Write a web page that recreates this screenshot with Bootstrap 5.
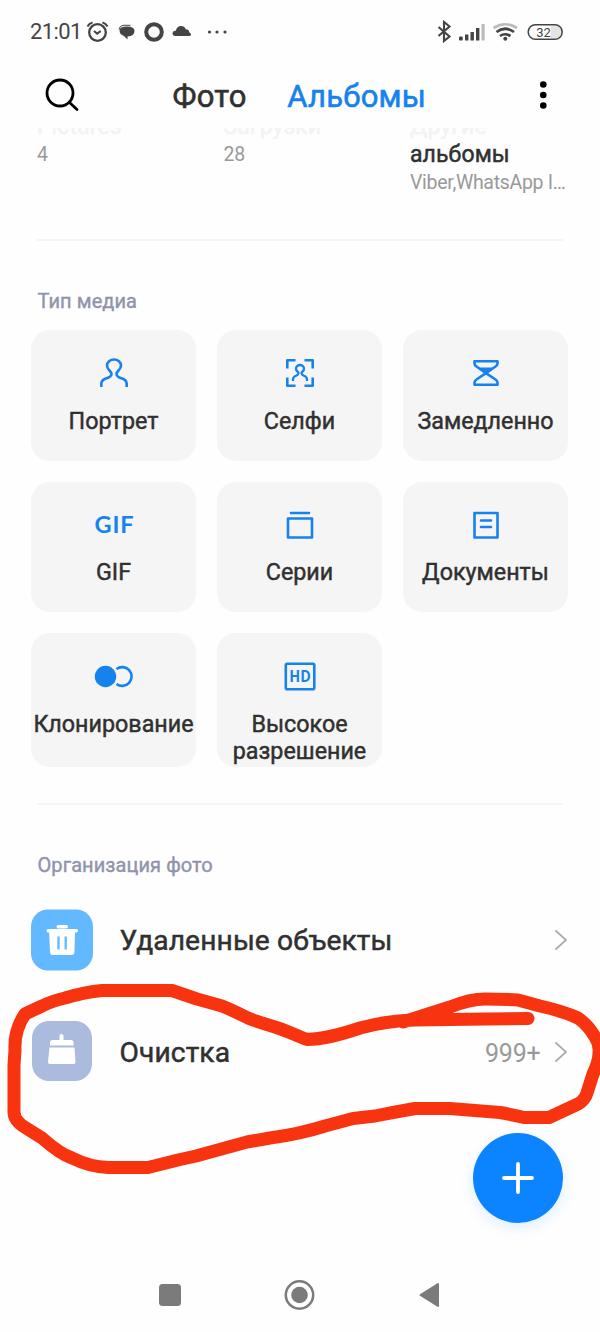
<!DOCTYPE html>
<html lang="ru">
<head>
<meta charset="utf-8">
<meta name="viewport" content="width=device-width, initial-scale=1">
<title>Альбомы</title>
<link href="https://cdn.jsdelivr.net/npm/bootstrap@5.3.0/dist/css/bootstrap.min.css" rel="stylesheet">
<style>
  body { font-family: Roboto, "Noto Sans", sans-serif; color: #303030; background: #fefefe; line-height: 1.2; }
  svg { display: block; flex: none; }
  .screen { width: 600px; height: 1332px; }
  .status-bar { height: 64px; padding: 0 36px 0 30px; color: #444; }
  .clock { font-size: 22px; letter-spacing: -.6px; padding-top: 1px; width: 52px; }
  .tabs-bar { height: 60px; padding: 4px 43px 0; }
  .tab-item { font-size: 31px; letter-spacing: .25px; padding-top: 2px; -webkit-text-stroke: .6px; }
  .accent { color: #1582ee; }
  .albums { height: 115px; padding: 0 32px 0 37px; }
  .album { width: 186.5px; font-size: 19.5px; letter-spacing: -.3px; color: #999; line-height: 28px; margin-top: -11px; }
  .album:last-child { width: 158px; }
  .album-name { font-size: 23px; letter-spacing: .1px; -webkit-text-stroke: .5px; color: #303030; line-height: 28px; }
  .faded { color: #f3f3f3; clip-path: inset(15px 0 0 0); }
  .rule { height: 2px; background: #f5f5f5; margin: 0 37px; }
  .group-title { font-size: 20px; letter-spacing: .08px; font-weight: 400; -webkit-text-stroke: .4px; color: #8f94ab; padding-left: 37.5px; }
  .tiles { display: grid; grid-template-columns: repeat(3, 165px); grid-template-rows: 130.500px 130.500px 134px; gap: 21px; padding: 0 31px; }
  .tile { background: #f5f5f5; border-radius: 19px; padding-top: 24px; font-size: 23.3px; -webkit-text-stroke: .45px; line-height: 27px; white-space: nowrap; }
  .tile svg { height: 38px; width: 44px; margin-bottom: 15.8px; -webkit-text-stroke: 0; }
  .ic { fill: none; stroke: #1582ee; stroke-width: 2.6; stroke-linecap: round; stroke-linejoin: round; }
  .ic text, .ic .solid { fill: #1582ee; stroke: none; }
  .tool { height: 112px; padding: 0 32px 0 31px; font-size: 28.2px; letter-spacing: .1px; -webkit-text-stroke: .5px; }
  .tool .label { margin-left: 26.5px; padding-top: 1px; }
  .amount { font-size: 25px; letter-spacing: -.2px; -webkit-text-stroke: 0; color: #999; margin-right: 13.5px; padding-top: 3px; }
  .bottom-area { height: 145px; padding: 25px 37px 0; }
  .fab { width: 90px; height: 90px; background: #0d84ff; box-shadow: 0 5px 14px rgba(13,132,255,.13); }
  .system-nav { height: 72px; padding: 12px 158px 0; }
  .scribble { left: 0; top: 0; pointer-events: none; }
</style>
</head>
<body>
<div class="screen position-relative overflow-hidden d-flex flex-column">

  <header class="status-bar d-flex align-items-center justify-content-between">
    <div class="d-flex align-items-center">
      <span class="clock">21:01</span>
      <svg width="150" height="24" viewBox="82 20 150 24" fill="none" stroke="#444">
        <circle cx="97.500" cy="32.500" r="8.300" stroke-width="2.300"/>
        <path d="M94 31l3.200 2.700 3.500-2.700M87.500 26.500q1.500-3 5-4M102.500 22.500q3.500 1 5 4" stroke-width="2.100"/>
        <path d="M119.500 30.500q0-4 7.500-4 7.500 0 7.500 4.500 0 5-7 5.500v3l-3.500-3.500q-4.500-1.500-4.500-5.500z" fill="#444" stroke="none"/>
        <path d="M119 29.500q.5-3.500 4-4.200h7.500" stroke-width="1"/>
        <circle cx="154" cy="32" r="7.800" stroke-width="4"/>
        <path d="M175 36q-2.500-.3-2.500-2.500 0-2.500 3.200-2.800 1.300-4.700 5.300-4.700 3.500 0 4.800 3.300 3.200.2 3.500 3 1.700.7 1.700 2.200 0 1.500-2 1.500z" fill="#444" stroke="none"/>
        <g fill="#444" stroke="none"><circle cx="209.500" cy="32" r="1.600"/><circle cx="217" cy="32" r="1.600"/><circle cx="225" cy="32" r="1.600"/></g>
      </svg>
    </div>
    <svg width="128" height="24" viewBox="437 20 128 24" fill="none" stroke="#444">
      <path d="M439.500 27l11 9.500-5.500 4.500V22l5.500 4.500-11 9.500" stroke-width="2.100"/>
      <g fill="#444" stroke="none"><rect x="460" y="36.500" width="3.700" height="4" rx="1"/><rect x="466" y="34.500" width="3.400" height="6"/><rect x="471.500" y="32" width="3.400" height="8.500"/><rect x="477" y="28" width="3.400" height="12.500"/><rect x="482.500" y="24" width="3.200" height="16.500" fill="#bbb"/></g>
      <g stroke-width="2.700"><path d="M494.500 28q11.500-7.500 23.500 0" stroke="#bbb"/><path d="M497.500 32q8.500-6.500 17.500 0M501 36q5-3.500 10.500 0"/></g>
      <circle cx="506.300" cy="38.800" r="2" fill="#444" stroke="none"/>
      <path d="M552 26h5a6 6 0 0 1 0 12h-5z" fill="#e4e4e4" stroke="none"/>
      <rect x="529.200" y="24.700" width="34" height="14.600" rx="7.300" stroke-width="1.500"/>
      <text x="544.500" y="36.500" font-size="13" text-anchor="middle" fill="#444" stroke="none">32</text>
    </svg>
  </header>

  <nav class="tabs-bar d-flex align-items-center">
    <svg width="38" height="38" viewBox="43 77 38 38" fill="none" stroke="#000" stroke-width="2.800" stroke-linecap="round"><circle cx="60" cy="93" r="13"/><path d="M69.500 102.500l7.500 7"/></svg>
    <span class="tab-item" style="margin-left:91.5px">Фото</span>
    <span class="tab-item accent" style="margin-left:40.5px">Альбомы</span>
    <svg class="ms-auto" width="28" height="34" viewBox="529 79 28 34"><circle cx="543.300" cy="84.500" r="3.300"/><circle cx="543.300" cy="95" r="3.300"/><circle cx="543.300" cy="105.500" r="3.300"/></svg>
  </nav>

  <section class="albums d-flex">
    <div class="album"><div class="album-name faded">Pictures</div>4</div>
    <div class="album"><div class="album-name faded">Загрузки</div>28</div>
    <div class="album"><div class="album-name faded">Другие</div><div class="album-name">альбомы</div><div class="text-nowrap">Viber,WhatsApp I…</div></div>
  </section>

  <div class="rule"></div>
  <h2 class="group-title mb-0" style="padding-top:48px;height:89px">Тип медиа</h2>

  <section class="tiles">
    <div class="tile d-flex flex-column align-items-center"><svg class="ic" viewBox="-22 -19 44 38"><path stroke-linecap="butt" d="M-12.700 14V11Q-12.700 7-8 5.500-2.500 3.800-2.500 1-2.500-.5-4.500-2.500-7-5-7-7.500A7 6 0 0 1 7-7.500Q7-5 4.500-2.500 2.500-.5 2.500 1 2.500 3.800 8 5.500 12.700 7 12.700 11V14"/></svg>Портрет</div>
    <div class="tile d-flex flex-column align-items-center"><svg class="ic" viewBox="-22 -19 44 38"><g stroke-linecap="butt"><path d="M-12.700-4.500v-8.200h8.200M4.500-12.700h8.200v8.200M12.700 4.500v8.200H4.500M-4.500 12.700h-8.200V4.500"/><path stroke-width="2.300" d="M-7 8V6.500Q-7 4-4 2.800-1.500 1.700-1.500.3-1.500-.7-2.500-1.500-4-2.700-4-4.300a4 3.700 0 0 1 8 0Q4-2.700 2.500-1.500 1.500-.7 1.500.3 1.500 1.700 4 2.800 7 4 7 6.500V8"/></g></svg>Селфи</div>
    <div class="tile d-flex flex-column align-items-center"><svg class="ic" viewBox="-22 -19 44 38"><path d="M-11.500-11.800h23v2.300Q11.500-8 9.500-6.500L0 0.200l9.500 6.300Q11.500 8 11.500 9.500v2.300h-23V9.500Q-11.500 8-9.500 6.500L0 .2l-9.500-6.700Q-11.500-8-11.500-9.500z"/><path class="solid" d="M-8-5.500H8L0 .2z"/></svg>Замедленно</div>
    <div class="tile d-flex flex-column align-items-center"><svg class="ic" viewBox="-22 -19 44 38"><text x="0" y="7.500" text-anchor="middle" font-family="Lato" font-size="23.500" font-weight="700" textLength="39">GIF</text></svg>GIF</div>
    <div class="tile d-flex flex-column align-items-center"><svg class="ic" viewBox="-22 -19 44 38"><path d="M-9-12H9M-12-6.500H12V12.500H-12z"/></svg>Серии</div>
    <div class="tile d-flex flex-column align-items-center"><svg class="ic" viewBox="-22 -19 44 38"><path d="M-11.500-12h23v24.500h-23zM-5-4.500H5M-5 2H5"/></svg>Документы</div>
    <div class="tile d-flex flex-column align-items-center"><svg class="ic" viewBox="-22 -19.500 44 38"><circle class="solid" cx="-8.500" cy="0" r="10.700"/><path stroke-linecap="butt" d="M2.500-7.500A9.400 9.400 0 1 1 2.500 7.500"/></svg>Клонирование</div>
    <div class="tile d-flex flex-column align-items-center text-center"><svg class="ic" viewBox="-22 -19.500 44 38"><rect x="-14.200" y="-12.800" width="28.500" height="25.500" rx="1.500"/><text x="0" y="5.700" text-anchor="middle" font-family="Open Sans" font-size="15.500" font-weight="700" textLength="21.500" lengthAdjust="spacingAndGlyphs">HD</text></svg>Высокое<br>разрешение</div>
  </section>

  <div class="rule" style="margin-top:36px"></div>
  <h2 class="group-title mb-0" style="padding-top:48px;height:79px">Организация фото</h2>

  <section>
    <div class="tool d-flex align-items-center">
      <svg width="62" height="62" viewBox="0 0 62 62"><rect y=".5" width="62" height="61" rx="17" fill="#62b9ff"/><rect x="25.500" y="16" width="11.500" height="3.500" rx="1.700" fill="#fff"/><path d="M17 20h28.500q1.500 0 1.500 1.700T45.500 23.500H44l-.6 20q-.2 2.500-2.700 2.500H21.700q-2.500 0-2.700-2.500l-.8-20H17q-1.500 0-1.500-1.800T17 20z" fill="#fff"/><path d="M27.500 27.500v13M34.700 27.500v13" stroke="#62b9ff" stroke-width="2.300"/></svg>
      <span class="label">Удаленные объекты</span>
      <svg class="ms-auto" width="14" height="22" viewBox="0 0 14 22" fill="none" stroke="#aaa" stroke-width="1.700"><path d="M1.500 1.500L12 11 1.500 20.500"/></svg>
    </div>
    <div class="tool d-flex align-items-center">
      <svg width="62" height="62" viewBox="0 1 62 62"><rect x="1" y="1" width="60" height="60" rx="17" fill="#abbbdd"/><path d="M19 25.500v-3q0-2.500 2.500-2.500h7V16q0-2 2-2t2 2v4h7.500q2.500 0 2.500 2.500v3zM18.500 27.500h25L44.500 42q0 2-1.500 2H18.500q-1.500 0-1.500-2z" fill="#fff"/></svg>
      <span class="label">Очистка</span>
      <span class="amount ms-auto">999+</span>
      <svg width="14" height="22" viewBox="0 0 14 22" fill="none" stroke="#aaa" stroke-width="1.700"><path d="M1.500 1.500L12 11 1.500 20.500"/></svg>
    </div>
  </section>

  <div class="bottom-area d-flex justify-content-end">
    <div class="fab rounded-circle d-flex align-items-center justify-content-center">
      <svg width="34" height="34" viewBox="-17 -17 34 34" stroke="#fff" stroke-width="3.800" stroke-linecap="round"><path d="M-14 0H14M0-14V14"/></svg>
    </div>
  </div>

  <footer class="system-nav d-flex align-items-center justify-content-between">
    <svg width="24" height="24"><rect x="1" y="1" width="22" height="22" rx="3.500" fill="#7b7b7b"/></svg>
    <svg width="32" height="32" viewBox="-15.500 -16 32 32"><circle r="13.700" fill="none" stroke="#7b7b7b" stroke-width="2.500"/><circle r="8.300" fill="#7b7b7b"/></svg>
    <svg width="24" height="28" viewBox="0 0 24 28"><path d="M2.500 14L20 3v22z" fill="#7b7b7b" stroke="#7b7b7b" stroke-width="2" stroke-linejoin="round"/></svg>
  </footer>

  <svg class="scribble position-absolute" width="600" height="1332" fill="none" stroke="#f83410" stroke-width="13" stroke-linecap="round" stroke-linejoin="round">
    <path d="M528 1018.500L485 1019 415 1020Q385 1021 360 1028 328 1039 307 1039.500C300 1037 285 1030 275 1027Q255 1021 248 1018 232 1010 222 1006L197 999 172 990.500H102Q85 992 65 998 52 1001 42 1006L25 1014Q14 1030 15 1050L14 1065V1112Q14 1121 26 1128L42 1138Q60 1154 72 1158 90 1167 108 1167.500H148L178 1160 196 1156 247 1142 270 1138Q300 1134 325 1126L353 1118.500 375 1116Q395 1112 415 1108.500H450L500 1112.500Q513 1115 524 1117.500H549L578 1104Q585 1100 587 1093L593 1074Q599 1061 599 1053 600 1044 595 1037 588 1025 578 1018 563 1011 540 1006L518 1000Q500 999 485 999 470 999 450 1007L403 1022"/>
  </svg>
</div>
<script src="https://cdn.jsdelivr.net/npm/bootstrap@5.3.0/dist/js/bootstrap.bundle.min.js"></script>
</body>
</html>
